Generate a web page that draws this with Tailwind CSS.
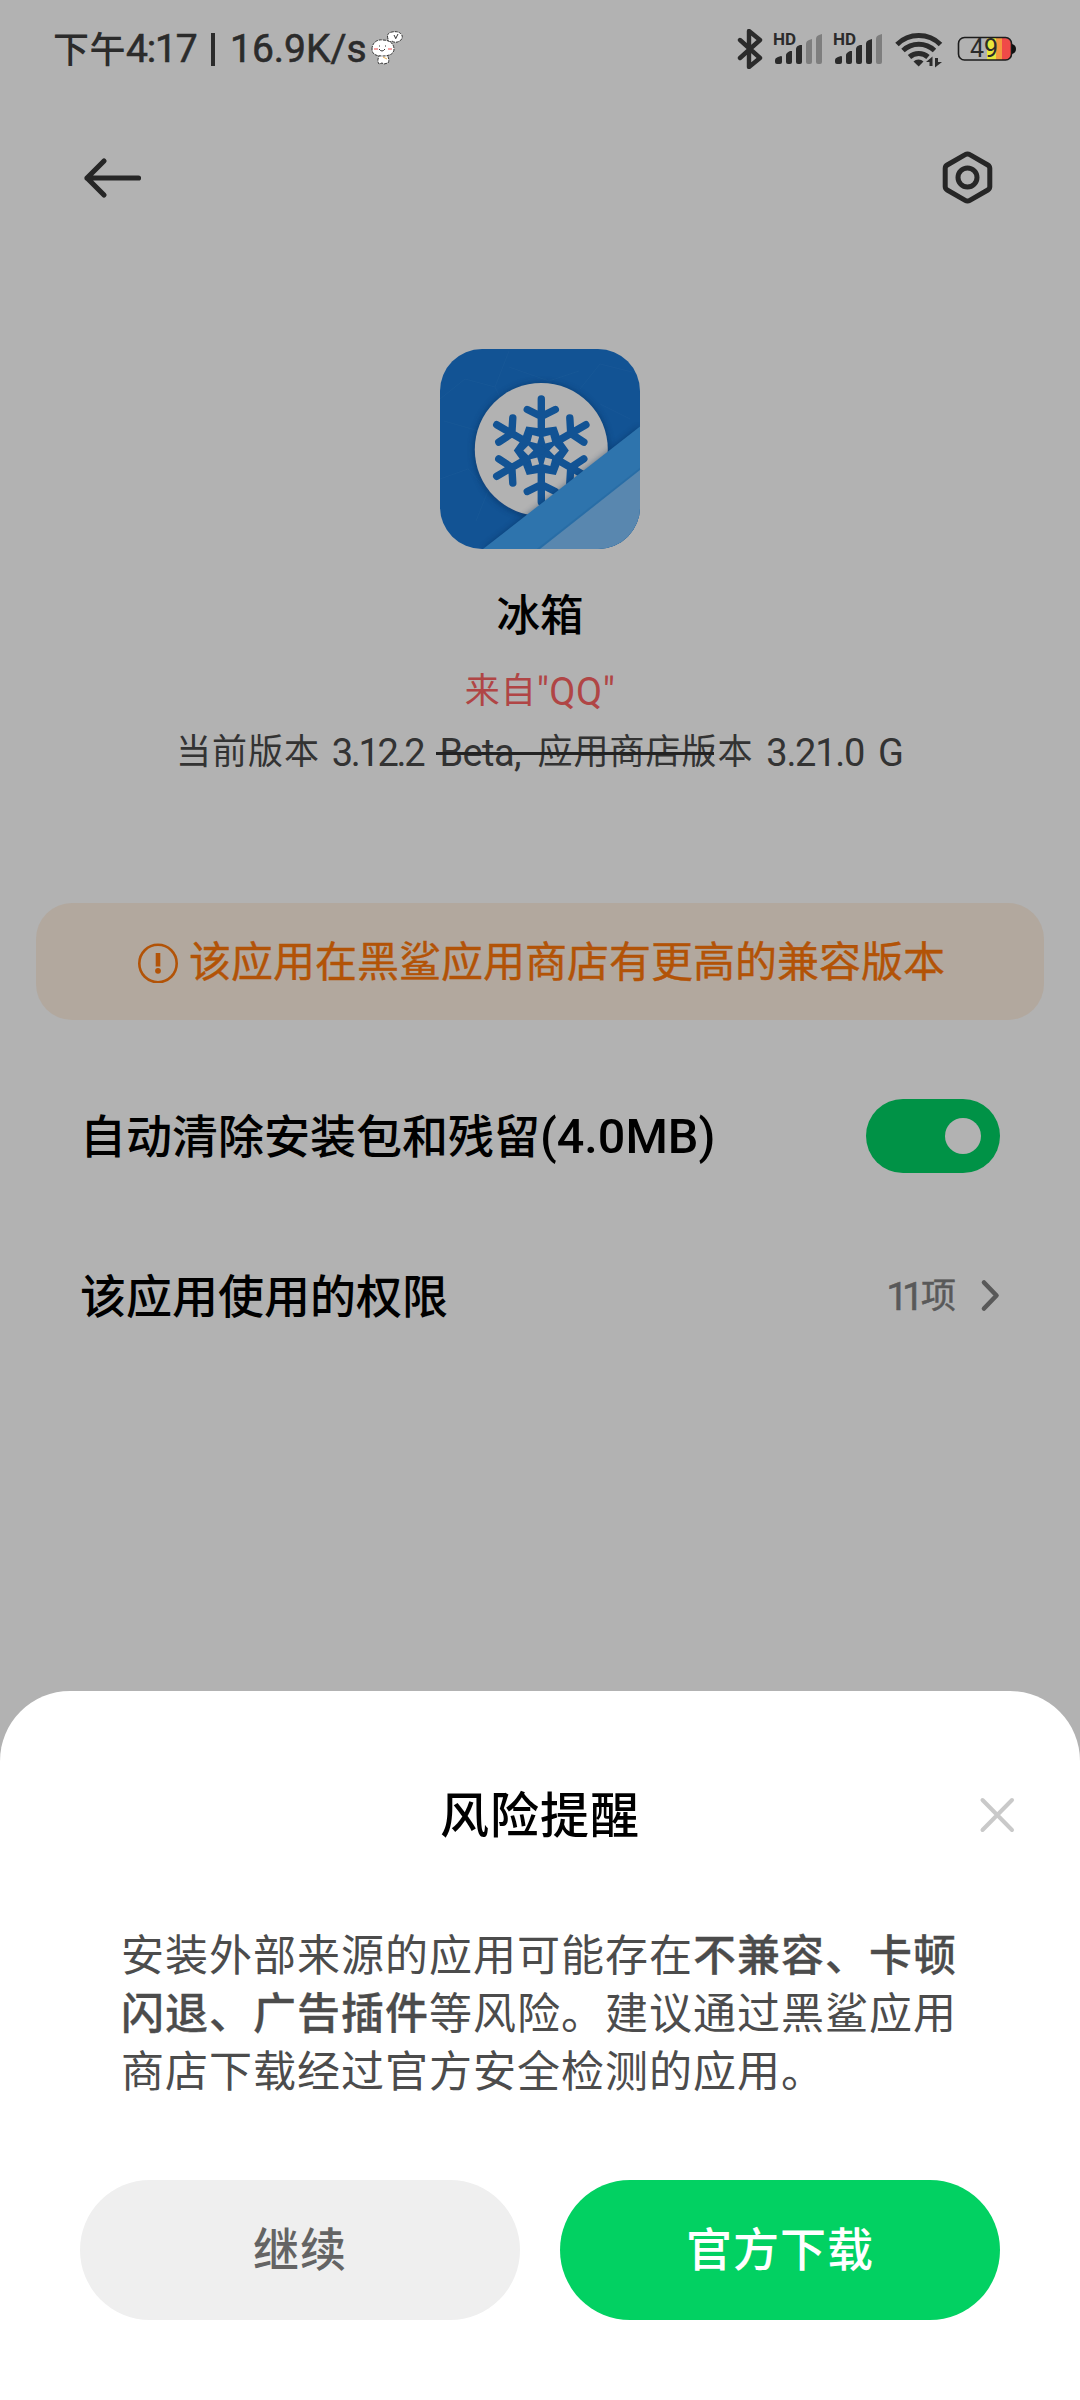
<!DOCTYPE html>
<html lang="zh-CN">
<head>
<meta charset="utf-8">
<title>风险提醒</title>
<script src="https://cdn.jsdelivr.net/npm/@tailwindcss/browser@4"></script>
</head>
<body class="bg-[#b2b2b2]">
<div class="flex h-[2400px] w-[1080px] flex-col overflow-hidden bg-[#b2b2b2] font-['Roboto','Noto_Sans_CJK_SC',sans-serif] whitespace-nowrap text-black">

  <!-- Status bar -->
  <header class="flex h-[98px] shrink-0 items-center pr-[63px] pl-[53px] text-[#2b2b2b]">
    <div class="flex items-center text-[39px] leading-none">
      <span class="w-[73px] pt-[3px] text-[36px] font-medium tracking-[0.5px]">下午</span>
      <span class="w-[75px] pt-[1px] tracking-[-1.2px] [-webkit-text-stroke:0.6px_currentColor]">4:17</span>
      <span class="mr-[15px] ml-[10px] h-[33px] w-1 bg-[#2b2b2b]"></span>
      <span class="w-[140px] pt-[1px] [-webkit-text-stroke:0.6px_currentColor]">16.9K/s</span>
      <svg class="h-[36px] w-[36px]" viewBox="0 0 36 36" fill="#fff" stroke="#333" stroke-width="1" stroke-dasharray="3 1">
        <path d="M18 8q-2-6 4-7 5-1 8 1 4 3 1 7-5 4-9 1l-4 2z"/>
        <path d="M10 23c-2 4-3 7-1 10l3-1 2 1 4-1c2-3 0-6-1-9z"/>
        <path d="M2 18c0-6 5-10 11-9 7 0 11 4 11 9s-5 7-11 7S2 24 2 18z"/>
        <path d="M4 18h4M18 18h4" stroke="#f5a5a5" stroke-width="2" stroke-dasharray="none"/>
        <path d="M9 18q3 4 6 0M9 15h1M15 15h1M24 4l2 4M28 3l-2 4" fill="none" stroke-dasharray="none"/>
        <path d="M13 26l4 2" stroke="#e9ad4a" stroke-dasharray="none"/>
      </svg>
    </div>
    <div class="ml-auto flex items-center">
      <svg class="h-[40px] w-[28px]" viewBox="0 0 28 40" fill="none" stroke="#2b2b2b" stroke-width="4.400" stroke-linecap="round" stroke-linejoin="round"><path d="M4 11l20 18-11 9V2l11 9L4 29"/></svg>
      <div class="relative ml-[9px] h-[36px] w-[52px]">
        <span class="absolute top-0 left-0 text-[17px] leading-[17px] font-bold">HD</span>
        <svg class="h-[36px] w-[52px]" viewBox="0 0 52 36" fill="#2b2b2b"><path d="M2 29q0-2 3-3l3-1q1 0 1 1v5q0 2-2 2H4q-2 0-2-2zM13 24q0-2 4-4l2 0v11q0 2-2 2h-2q-2 0-2-2zM23 18q0-3 4-4h2v17q0 2-2 2h-2q-2 0-2-2z"/><path fill="#7e7e7e" d="M33 13q0-3 3-4l3-1v23q0 2-2 2h-2q-2 0-2-2zM43 8q0-3 3-4l3-1v28q0 2-2 2h-2q-2 0-2-2z"/></svg>
      </div>
      <div class="relative ml-[8px] h-[36px] w-[52px]">
        <span class="absolute top-0 left-0 text-[17px] leading-[17px] font-bold">HD</span>
        <svg class="h-[36px] w-[52px]" viewBox="0 0 52 36" fill="#2b2b2b"><path d="M2 29q0-2 3-3l3-1q1 0 1 1v5q0 2-2 2H4q-2 0-2-2zM13 24q0-2 4-4l2 0v11q0 2-2 2h-2q-2 0-2-2zM23 18q0-3 4-4h2v17q0 2-2 2h-2q-2 0-2-2zM33 13q0-3 3-4l3-1v23q0 2-2 2h-2q-2 0-2-2z"/><path fill="#7e7e7e" d="M43 8q0-3 3-4l3-1v28q0 2-2 2h-2q-2 0-2-2z"/></svg>
      </div>
      <svg class="ml-[10px] h-[38px] w-[48px]" viewBox="0 0 48 38" fill="none" stroke="#2b2b2b" stroke-width="5"><path d="M2 14.500a31 31 0 0 1 43.500 0M8 20.500a23 23 0 0 1 31.500 0M14.500 27a14 14 0 0 1 18.500 0"/><path stroke="none" fill="#2b2b2b" d="M18.500 31.500a7 7 0 0 1 10 0L23.700 36.500z"/><path stroke="none" fill="#2b2b2b" d="M37.500 26.500v9.500h-3v-4h-3.500zM40 37.500v-9.500h3v4h4z"/></svg>
      <div class="relative ml-[14px] flex h-[26px] w-[60px] items-center">
        <svg class="h-[26px] w-[60px]" viewBox="0 0 60 26"><path fill="#e8e83c" d="M30 2h9v22h-9z"/><path fill="#f49a3e" d="M39 2h6v22h-6z"/><path fill="#f04a48" d="M45 2h3q6 0 6 6v10q0 6-6 6h-3z"/><rect x="1.500" y="1.500" width="53" height="22.500" rx="6" fill="none" stroke="#1c1c1c" stroke-width="1.600"/><path fill="#111" d="M55 8q4 1 4 5t-4 5z"/></svg>
        <span class="absolute inset-x-0 top-0 pl-[13px] text-[25px] leading-[26px]">49</span>
      </div>
    </div>
  </header>

  <!-- Navigation -->
  <nav class="flex h-[160px] shrink-0 items-center justify-between pr-[83px] pl-[82px]">
    <svg class="h-[44px] w-[60px]" viewBox="0 0 60 44" fill="none" stroke="#262626" stroke-width="5.200" stroke-linecap="round" stroke-linejoin="round"><path d="M56.500 22H5M22 5L5 22l17 17"/></svg>
    <svg class="h-[56px] w-[60px]" viewBox="0 0 60 56" fill="none" stroke="#262626" stroke-width="5" stroke-linejoin="round"><path d="M28.200 4.700q2.300-1.400 4.600 0l18 10.300q2 1.200 2 3.500v18q0 2.300-2 3.500l-18 10.300q-2.300 1.400-4.600 0l-18-10.300q-2-1.200-2-3.500v-18q0-2.300 2-3.500z"/><circle cx="30.500" cy="27.500" r="9.500"/></svg>
  </nav>

  <!-- App summary -->
  <section class="mt-[91px] flex shrink-0 flex-col items-center">
    <svg class="h-[200px] w-[200px] rounded-[42px]" viewBox="0 0 200 200">
      <defs>
        <filter id="soft" x="-20%" y="-20%" width="140%" height="140%"><feGaussianBlur stdDeviation="3"/></filter>
        <g id="arm"><path d="M0 0V-51.500M-14 -41L0 -34L14 -41" fill="none" stroke="#125394" stroke-width="7.400" stroke-linecap="round" stroke-linejoin="round"/></g>
        <path id="hole" d="M8 0L13 -5L18 0L13 5z" fill="#b2b2b2"/>
      </defs>
      <rect width="200" height="200" fill="#125394"/>
      <path d="M0 50l25-20 30 8 14 28M55 38l14-36M69 66l-30 16-35-10M140 40l20-25 32 8M0 130l28-10 20 22-12 30M69 18l40 14 30-10M160 55l30 15" fill="none" stroke="#1b5a98" stroke-width="1" opacity=".6"/>
      <circle cx="101.300" cy="101.500" r="67.500" fill="#082f5c" opacity=".6" filter="url(#soft)"/>
      <circle cx="101.300" cy="100.500" r="66.500" fill="#b2b2b2"/>
      <g transform="translate(101.300 101.500)">
        <path fill="#125394" d="M27.500 0L19.500 11.300L14.500 24.500L0 22L-14.500 24.500L-19.500 11.300L-27.500 0L-19.500 -11.300L-15 -24L0 -22L15 -24L19.500 -11.300z"/>
        <use href="#arm"/><use href="#arm" transform="rotate(60)"/><use href="#arm" transform="rotate(120)"/><use href="#arm" transform="rotate(180)"/><use href="#arm" transform="rotate(240)"/><use href="#arm" transform="rotate(300)"/>
        <use href="#hole"/><use href="#hole" transform="rotate(60)"/><use href="#hole" transform="rotate(120)"/><use href="#hole" transform="rotate(180)"/><use href="#hole" transform="rotate(240)"/><use href="#hole" transform="rotate(300)"/>
      </g>
      <path d="M43 200L200 77.500V200z" fill="#06284f" opacity=".45" filter="url(#soft)"/>
      <path d="M43 200L200 77.500V200z" fill="#2e74ad"/>
      <path d="M98 201L202 119" stroke="#22649c" stroke-width="3" opacity=".4"/>
      <path d="M100 200L200 121V200z" fill="#5987af"/>
    </svg>
    <h1 class="mt-[45px] text-[43.500px] leading-[46px] font-medium">冰箱</h1>
    <p class="mt-[29px] flex text-[38px] leading-[46px] text-[#b04545]"><span class="text-[35px] tracking-[1px]">来自</span><span class="tracking-[0.5px]">"QQ"</span></p>
    <p class="mt-[15px] flex w-[728px] items-center text-[38px] leading-[46px] text-[#333]">
      <span class="w-[156px] text-[35px] tracking-[1px]">当前版本</span>
      <span class="w-[108px] tracking-[-2.300px]">3.12.2</span>
      <span class="relative flex items-center">
        <span class="w-[98px] tracking-[-0.6px]">Beta,</span>
        <span class="text-[35px] tracking-[1px]">应用商店版</span>
        <span class="absolute top-[22px] left-[-3px] h-[3px] w-[278px] bg-[#222]"></span>
      </span>
      <span class="w-[49px] text-[35px] tracking-[1px]">本</span>
      <span class="w-[112px] tracking-[-1.300px]">3.21.0</span>
      <span>G</span>
    </p>
  </section>

  <!-- Compatibility banner -->
  <section class="mx-[36px] mt-[127px] flex h-[117px] shrink-0 items-center rounded-[36px] bg-[#b2a89e] pl-[101px] text-[#b25307]">
    <svg class="h-[42px] w-[42px]" viewBox="0 0 42 42" fill="none" stroke="currentColor" stroke-width="2.600"><circle cx="21" cy="22.500" r="18.700"/><path stroke-width="4.600" d="M21 12v13.500"/><circle cx="21" cy="29.800" r="2.900" fill="currentColor" stroke="none"/></svg>
    <span class="ml-[10px] pt-[2px] text-[42px] [-webkit-text-stroke:0.4px_currentColor]">该应用在黑鲨应用商店有更高的兼容版本</span>
  </section>

  <!-- Options -->
  <section class="mt-[36px] flex shrink-0 flex-col pr-[80px] pl-[80px] text-[46px] font-medium">
    <div class="flex h-[160px] items-center justify-between">
      <span class="flex items-center pt-[2px]"><span>自动清除安装包和残留</span><span class="text-[48.500px]">(4.0MB)</span></span>
      <span class="flex h-[74px] w-[134px] items-center justify-end rounded-full bg-[#009246] pr-[19px]"><span class="size-[36px] rounded-full bg-[#b2b2b2]"></span></span>
    </div>
    <div class="flex h-[160px] items-center">
      <span class="pt-[2px]">该应用使用的权限</span>
      <span class="ml-auto flex items-center pt-[2px] text-[35px] font-normal text-[#595959]"><span class="text-[39px] tracking-[-6px] [-webkit-text-stroke:0.5px_currentColor]">11</span><span class="ml-[3px] [-webkit-text-stroke:0.5px_currentColor]">项</span></span>
      <svg class="ml-[22px] h-[36px] w-[22px]" viewBox="0 0 22 36" fill="none" stroke="#595959" stroke-width="4.600" stroke-linecap="round" stroke-linejoin="round"><path d="M6 4.500l12.500 13L6 30.500"/></svg>
    </div>
  </section>

  <!-- Risk sheet -->
  <section class="mt-auto flex h-[709px] shrink-0 flex-col rounded-t-[70px] bg-white">
    <div class="grid grid-cols-[1fr_auto_1fr] items-center pt-[96px] pr-[63px] pl-[63px]">
      <h2 class="col-start-2 pt-[2px] text-[49px] leading-[56px] font-medium tracking-[1px]">风险提醒</h2>
      <svg class="size-[40px] justify-self-end" viewBox="0 0 40 40" fill="none" stroke="#c9c9c9" stroke-width="4" stroke-linecap="round"><path d="M5.500 4L35 34M35 4L5.500 34"/></svg>
    </div>
    <p class="mt-[82px] pl-[121px] text-[43px] leading-[58px] tracking-[1px] text-[#4c4c4c]">安装外部来源的应用可能存在<b class="font-medium [-webkit-text-stroke:0.3px_currentColor]">不兼容、卡顿</b><br><b class="font-medium [-webkit-text-stroke:0.3px_currentColor]">闪退、广告插件</b>等风险。建议通过黑鲨应用<br>商店下载经过官方安全检测的应用。</p>
    <div class="mt-auto mb-[80px] grid grid-cols-2 gap-[40px] px-[80px] text-[46px] font-medium tracking-[1px]">
      <button class="h-[140px] rounded-full bg-[#efefef] pt-[1px] text-[#646464]">继续</button>
      <button class="h-[140px] rounded-full bg-[#02d162] pt-[1px] text-white">官方下载</button>
    </div>
  </section>
</div>
</body>
</html>
